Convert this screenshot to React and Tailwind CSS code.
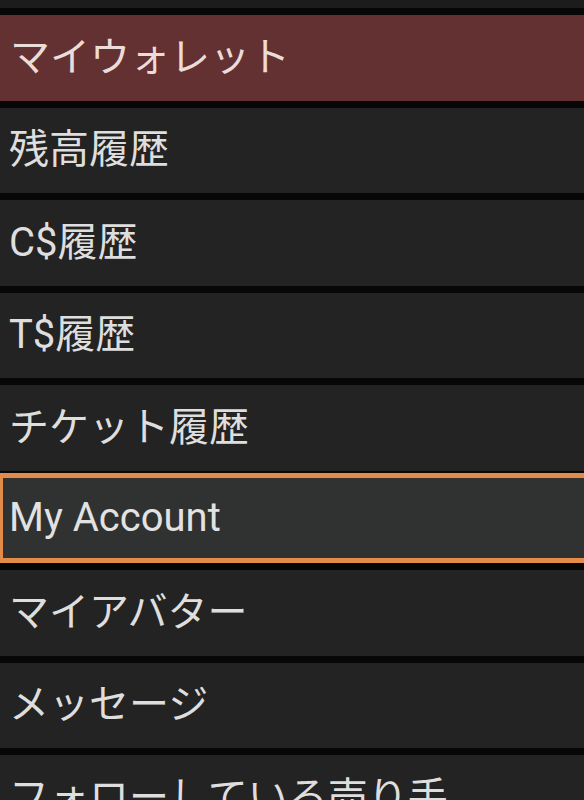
import React from "react";

const items = [
  { label: "残高履歴" },
  { label: "C$履歴" },
  { label: "T$履歴" },
  { label: "チケット履歴" },
];
const items2 = [{ label: "マイアバター" }, { label: "メッセージ" }, { label: "フォローしている売り手" }];

const font = { fontFamily: "Roboto, 'Noto Sans CJK JP', sans-serif" };

function Row({ label }) {
  return (
    <div className="mt-[7px] flex h-[85.5px] w-[600px] shrink-0 items-center bg-[#232323] pl-[9px] text-[40px] leading-none text-[#dedede]">
      {label}
    </div>
  );
}

export default function App() {
  return (
    <div className="h-[800px] w-[584px] overflow-hidden bg-[#070707]" style={font}>
      <div className="flex flex-col">
        <div className="h-[8px] w-[600px] shrink-0 bg-[#1c1c1c]" />
        <div className="mt-[7px] flex h-[85.5px] w-[600px] shrink-0 items-center bg-[#633132] pl-[10px] text-[40px] leading-none text-[#eadcd8]">
          マイウォレット
        </div>
        {items.map((it) => (
          <Row key={it.label} label={it.label} />
        ))}
        <div className="-ml-[2px] mt-[2px] flex h-[90.5px] w-[610px] shrink-0 items-center border-[5px] border-[#e38b48] bg-[#303131] pl-[6px] text-[40px] leading-none text-[#e2e2e2]">
          My Account
        </div>
        {items2.map((it) => (
          <Row key={it.label} label={it.label} />
        ))}
      </div>
    </div>
  );
}
